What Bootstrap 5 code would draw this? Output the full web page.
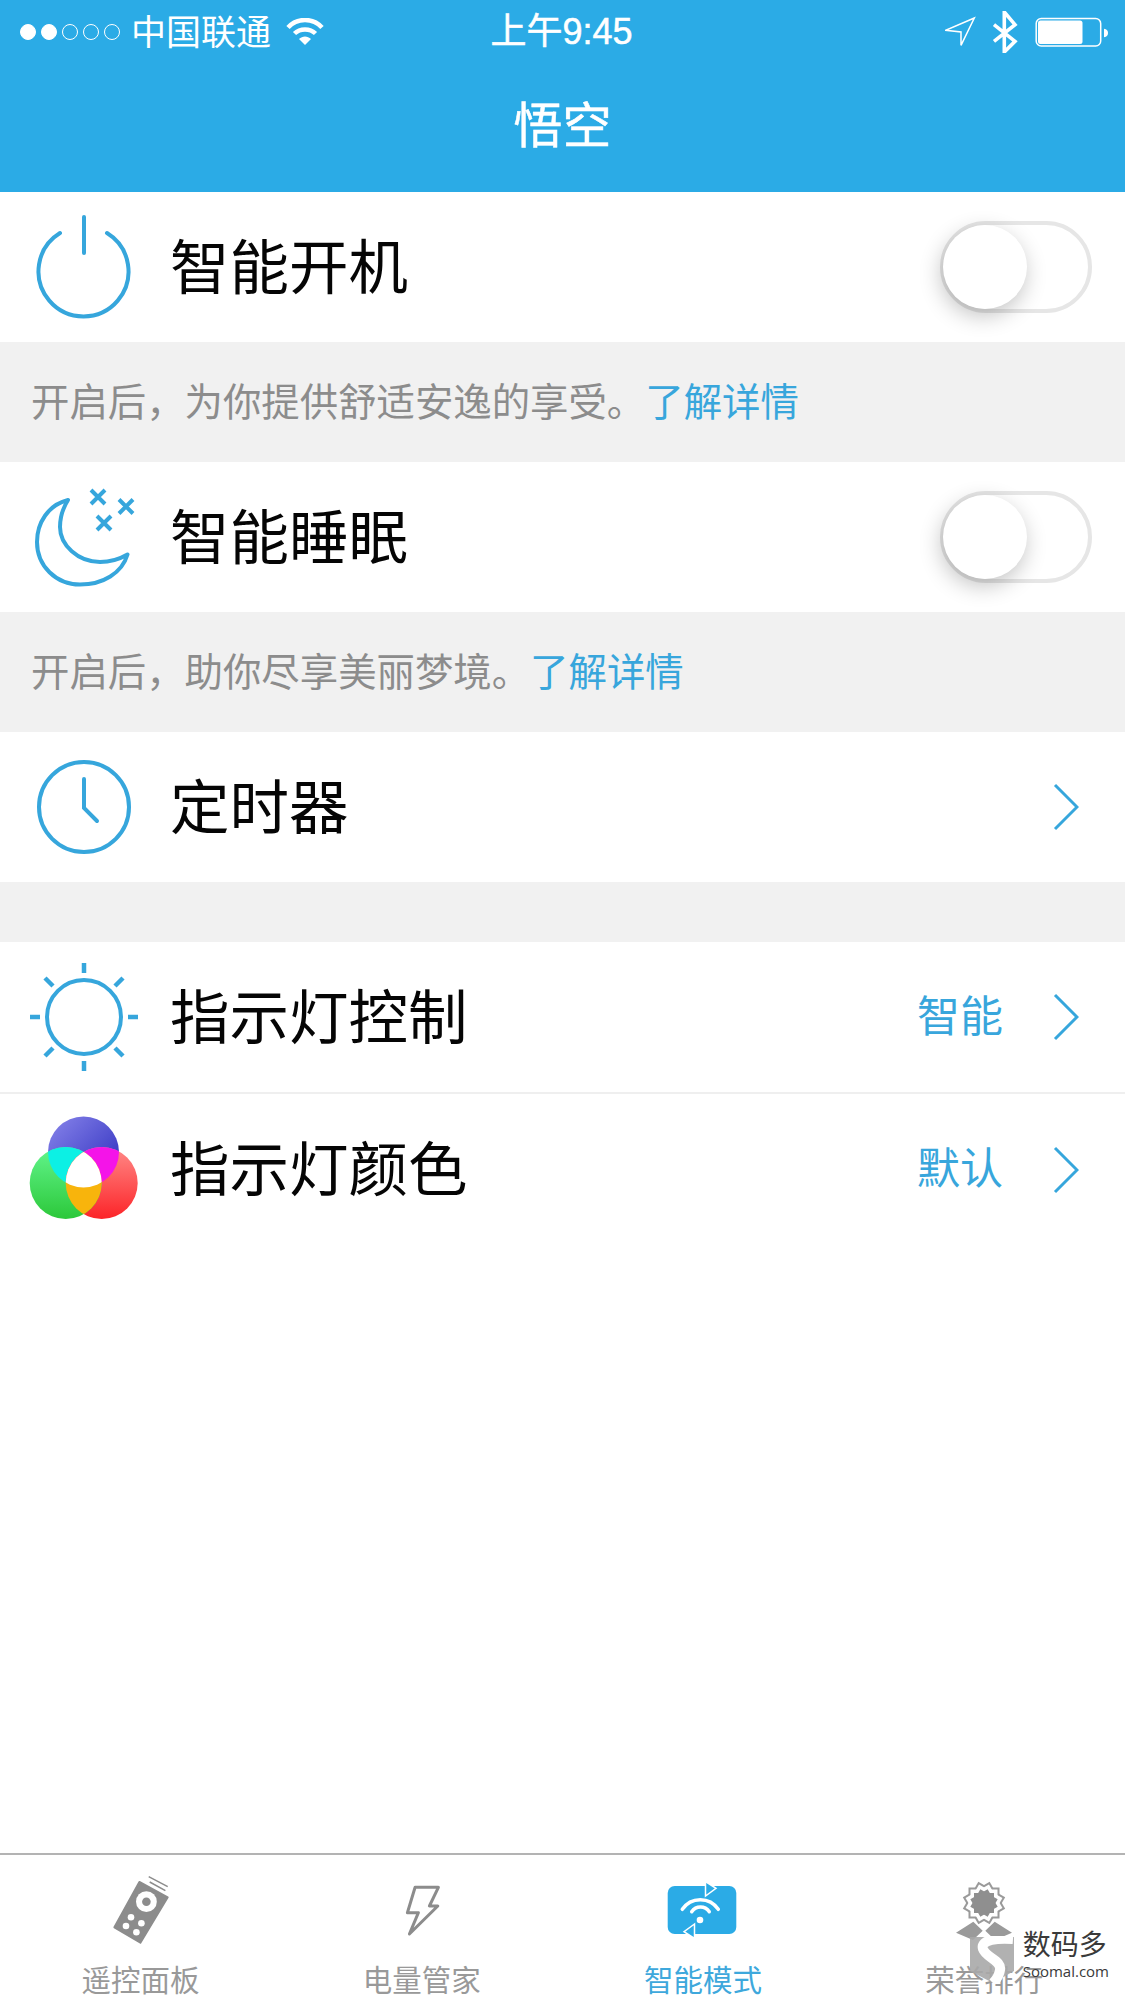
<!DOCTYPE html>
<html lang="zh-CN">

<head>
    <meta charset="UTF-8">
    <meta name="viewport" content="width=device-width, initial-scale=1.0">
    <title>悟空</title>
    <link href="https://cdn.jsdelivr.net/npm/bootstrap@5.3.3/dist/css/bootstrap.min.css" rel="stylesheet">
    <style>
        body {
            font-family: "Liberation Sans", "Noto Sans CJK SC", sans-serif;
            background: #fff;
        }

        .app-page {
            width: 1125px;
            height: 2001px;
            overflow: hidden;
        }

        .app-header {
            height: 192px;
            background: #2babe6;
            color: #fff;
        }

        .status-bar {
            height: 64px;
            padding: 0 17px 0 20px;
        }

        .status-side {
            flex: 1 1 0;
        }

        .signal-dots {
            gap: 5px;
        }

        .signal-dot {
            width: 16px;
            height: 16px;
            border: 1.5px solid #fff;
            border-radius: 50%;
        }

        .signal-dot.is-on {
            background: #fff;
        }

        .carrier-name {
            font-size: 35px;
            line-height: 1;
            margin: 0 15px 0 11px;
        }

        .clock-text {
            font-size: 36px;
            line-height: 1;
            margin-right: 5px;
            -webkit-text-stroke: .5px #fff;
        }

        .page-title {
            font-size: 49px;
            line-height: 1;
            padding-top: 38px;
            text-align: center;
            -webkit-text-stroke: .5px #fff;
        }

        .setting-row {
            height: 150px;
            padding: 0 46px 0 28px;
            color: #050505;
        }

        .setting-row.has-line {
            height: 153px;
            border-top: 2px solid #efefef;
        }

        .row-icon {
            width: 110px;
            height: 110px;
            flex: none;
            margin-right: 32px;
        }

        .row-name {
            font-size: 59.5px;
            line-height: 1;
            margin-top: 3px;
        }

        .row-value {
            font-size: 43px;
            line-height: 1;
            color: #38a6dc;
            margin-right: 50px;
        }

        .row-arrow {
            width: 26px;
            height: 48px;
            flex: none;
        }

        .hint-band {
            height: 120px;
            padding: 2px 0 0 31px;
            background: #f1f1f1;
            font-size: 38.4px;
            color: #8c8c8c;
        }

        .hint-band a {
            color: #38a6dc;
            text-decoration: none;
        }

        .gap-band {
            height: 60px;
            background: #f1f1f1;
        }

        .toggle-track {
            width: 152px;
            height: 92px;
            margin-right: -13px;
            padding: 3px;
            border: 4px solid #e6e6e6;
            border-radius: 46px;
            background: #fff;
        }

        .toggle-knob {
            width: 84px;
            height: 84px;
            margin: -3px 0 0 -4px;
            border-radius: 50%;
            background: #fff;
            box-shadow: -2px 7px 22px rgba(0, 0, 0, .24);
        }

        .tab-bar {
            height: 148px;
            border-top: 2px solid #b3b3b3;
            background: #fff;
        }

        .tab-item {
            flex: 1 1 0;
            padding-top: 15px;
            color: #999;
            text-decoration: none;
        }

        .tab-item.is-active {
            color: #3ea8dc;
        }

        .tab-icon {
            width: 100px;
            height: 80px;
        }

        .tab-label {
            font-size: 29.5px;
            line-height: 40px;
            margin-top: 11px;
        }

        .soomal-mark {
            right: 16px;
            bottom: 17px;
            color: #3a3a3a;
        }

        .soomal-name {
            font-size: 28px;
            line-height: 32px;
        }

        .soomal-url {
            font-family: "Open Sans", sans-serif;
            font-size: 15px;
            line-height: 18px;
        }
    </style>
</head>

<body>
    <div class="app-page d-flex flex-column">

        <!-- Header with status bar -->
        <header class="app-header flex-shrink-0">
            <div class="status-bar d-flex align-items-center">
                <div class="status-side d-flex align-items-center">
                    <span class="signal-dots d-flex">
                        <span class="signal-dot is-on"></span>
                        <span class="signal-dot is-on"></span>
                        <span class="signal-dot"></span>
                        <span class="signal-dot"></span>
                        <span class="signal-dot"></span>
                    </span>
                    <span class="carrier-name">中国联通</span>
                    <svg width="38" height="28" viewBox="0 0 38 28" fill="none" stroke="#fff" stroke-width="4.5">
                        <path d="M2 9.500C11-.5 27-.5 36 9.500" />
                        <path d="M8.500 15.500C14 10 24 10 29.500 15.500" />
                        <path d="M13 21 19 27 25 21C21.500 17.500 16.500 17.500 13 21Z" fill="#fff" stroke="none" />
                    </svg>
                </div>
                <div class="clock-text">上午9:45</div>
                <div class="status-side d-flex align-items-center justify-content-end">
                    <svg width="163" height="42" viewBox="945 9 163 42" fill="none" stroke="#fff">
                        <path d="M974.300 16 945.700 28.300 961 30 961 43.300Z" stroke-width="1.5" />
                        <path d="M994 22.700 1015 39.300 1004.300 50 1004.300 10 1015 22.700 994 39.300" stroke-width="3.6" />
                        <rect x="1036.200" y="16.500" width="64.500" height="27.500" rx="5" stroke-width="1.5" />
                        <rect x="1038" y="18.500" width="44.500" height="23.500" rx="2.500" fill="#fff" stroke="none" />
                        <path d="M1104 26.700C1107 27 1108 29 1108 31 1108 33 1107 35 1104 35.300Z" fill="#fff" stroke="none" />
                    </svg>
                </div>
            </div>
            <div class="page-title">悟空</div>
        </header>

        <main class="flex-grow-1">
            <!-- Smart power on -->
            <div class="setting-row d-flex align-items-center">
                <svg class="row-icon" viewBox="0 0 110 110" fill="none" stroke="#36a6dc" stroke-width="4" stroke-linecap="round">
                    <path d="M32 21A45 45 0 1 0 79 21" />
                    <path d="M56 5V41" />
                </svg>
                <span class="row-name">智能开机</span>
                <div class="toggle-track ms-auto">
                    <div class="toggle-knob"></div>
                </div>
            </div>
            <div class="hint-band d-flex align-items-center">
                <span>开启后，为你提供舒适安逸的享受。<a href="#">了解详情</a></span>
            </div>

            <!-- Smart sleep -->
            <div class="setting-row d-flex align-items-center">
                <svg class="row-icon" viewBox="0 0 110 110" fill="none" stroke="#36a6dc" stroke-width="4">
                    <path d="M40 18C20 23 9 41 9 60 9 84 28 102.500 52 102.500 75 102.500 94 91 99.500 72.500 90 78 80 80 72 80 50 80 32 63 32 45 32 35 35 26 40 18Z" stroke-linejoin="round" />
                    <path d="M63 8 77 22M77 8 63 22M91 17.500 105 31.500M105 17.500 91 31.500M69 34 83 48M83 34 69 48" />
                </svg>
                <span class="row-name">智能睡眠</span>
                <div class="toggle-track ms-auto">
                    <div class="toggle-knob"></div>
                </div>
            </div>
            <div class="hint-band d-flex align-items-center">
                <span>开启后，助你尽享美丽梦境。<a href="#">了解详情</a></span>
            </div>

            <!-- Timer -->
            <div class="setting-row d-flex align-items-center">
                <svg class="row-icon" viewBox="0 0 110 110" fill="none" stroke="#36a6dc" stroke-width="4" stroke-linecap="round">
                    <circle cx="56" cy="55" r="45" />
                    <path d="M56 27V56L69 69" />
                </svg>
                <span class="row-name">定时器</span>
                <svg class="row-arrow ms-auto" viewBox="0 0 26 48" fill="none" stroke="#36a6dc" stroke-width="3">
                    <path d="M2 2 24 24 2 46" />
                </svg>
            </div>

            <div class="gap-band"></div>

            <!-- Indicator control -->
            <div class="setting-row d-flex align-items-center">
                <svg class="row-icon" viewBox="0 0 110 110" fill="none" stroke="#36a6dc" stroke-width="4.500">
                    <circle cx="56" cy="55" r="37" stroke-width="4" />
                    <path d="M56 1V11M56 99V109M2 55H12M100 55H110M17 16 25 24M95 16 87 24M17 94 25 86M95 94 87 86" />
                </svg>
                <span class="row-name">指示灯控制</span>
                <span class="row-value ms-auto">智能</span>
                <svg class="row-arrow" viewBox="0 0 26 48" fill="none" stroke="#36a6dc" stroke-width="3">
                    <path d="M2 2 24 24 2 46" />
                </svg>
            </div>

            <!-- Indicator colour -->
            <div class="setting-row has-line d-flex align-items-center">
                <svg class="row-icon" viewBox="0 0 110 110">
                    <defs>
                        <linearGradient id="gradBlue" x1="0" y1="0" x2="1" y2="1">
                            <stop offset="0.1" stop-color="#7f7ce6" />
                            <stop offset="0.8" stop-color="#3a3ac4" />
                        </linearGradient>
                        <linearGradient id="gradGreen" x1="0" y1="0" x2="0" y2="1">
                            <stop offset="0" stop-color="#62f58c" />
                            <stop offset="1" stop-color="#2cc83a" />
                        </linearGradient>
                        <linearGradient id="gradRed" x1="0" y1="0" x2="0" y2="1">
                            <stop offset="0" stop-color="#ff8a88" />
                            <stop offset="1" stop-color="#fc2428" />
                        </linearGradient>
                        <clipPath id="clipBlue"><circle cx="55.500" cy="37" r="35.500" /></clipPath>
                        <clipPath id="clipGreen"><circle cx="37.700" cy="68" r="36" /></clipPath>
                        <clipPath id="clipRed"><circle cx="73.700" cy="68" r="36" /></clipPath>
                    </defs>
                    <circle cx="55.500" cy="37" r="35.500" fill="url(#gradBlue)" />
                    <circle cx="73.700" cy="68" r="36" fill="url(#gradRed)" />
                    <circle cx="37.700" cy="68" r="36" fill="url(#gradGreen)" />
                    <g clip-path="url(#clipBlue)">
                        <rect width="110" height="110" clip-path="url(#clipGreen)" fill="#0cf0e4" />
                        <rect width="110" height="110" clip-path="url(#clipRed)" fill="#f414e8" />
                    </g>
                    <g clip-path="url(#clipGreen)">
                        <rect width="110" height="110" clip-path="url(#clipRed)" fill="#f8b40c" />
                    </g>
                    <g clip-path="url(#clipBlue)">
                        <g clip-path="url(#clipGreen)">
                            <rect width="110" height="110" clip-path="url(#clipRed)" fill="#fff" />
                        </g>
                    </g>
                </svg>
                <span class="row-name">指示灯颜色</span>
                <span class="row-value ms-auto">默认</span>
                <svg class="row-arrow" viewBox="0 0 26 48" fill="none" stroke="#36a6dc" stroke-width="3">
                    <path d="M2 2 24 24 2 46" />
                </svg>
            </div>
        </main>

        <!-- Bottom tabs -->
        <nav class="tab-bar d-flex position-relative flex-shrink-0">
            <a class="tab-item d-flex flex-column align-items-center" href="#">
                <svg class="tab-icon" viewBox="0 0 100 80">
                    <path d="M48.400 12 76.700 27.300 49.400 72.700 23.400 57.300Z" fill="#8c8c8c" stroke="#8c8c8c" stroke-width="2" stroke-linejoin="round" />
                    <path d="M57.700 6.700 76.700 16.700M58.700 12 74.400 20.700" stroke="#8c8c8c" stroke-width="1.500" fill="none" />
                    <circle cx="55.400" cy="31.700" r="10.400" fill="#fff" />
                    <circle cx="55.400" cy="31.700" r="4.300" fill="#8c8c8c" />
                    <g fill="#fff">
                        <circle cx="40" cy="47.300" r="3.300" />
                        <circle cx="50.400" cy="53.300" r="3.300" />
                        <circle cx="35" cy="56" r="3.300" />
                        <circle cx="45.400" cy="62.300" r="3.300" />
                    </g>
                </svg>
                <span class="tab-label">遥控面板</span>
            </a>
            <a class="tab-item d-flex flex-column align-items-center" href="#">
                <svg class="tab-icon" viewBox="0 0 100 80">
                    <path d="M43.100 17.300H66.400L57.400 36H65.800L37.400 64 46.400 42.700H35.400Z" fill="none" stroke="#8c8c8c" stroke-width="3" stroke-linejoin="round" />
                </svg>
                <span class="tab-label">电量管家</span>
            </a>
            <a class="tab-item is-active d-flex flex-column align-items-center" href="#">
                <svg class="tab-icon" viewBox="0 0 100 80">
                    <rect x="14.700" y="16" width="68.600" height="48" rx="7" fill="#2babe6" />
                    <path d="M52.500 11.500 63 18.300 52.500 26Z" fill="#2babe6" stroke="#fff" stroke-width="1.500" />
                    <path d="M41.500 54 31 61.700 41.500 68.500Z" fill="#2babe6" stroke="#fff" stroke-width="1.500" />
                    <g fill="none" stroke="#fff" stroke-width="3.500" stroke-linecap="round">
                        <path d="M29.300 39.300C38 26.500 56.600 26.500 65.300 39.300" />
                        <path d="M38.700 41.700C43 35.500 52 35.500 56.300 41.700" />
                    </g>
                    <circle cx="47" cy="50" r="3.300" fill="#fff" />
                </svg>
                <span class="tab-label">智能模式</span>
            </a>
            <a class="tab-item d-flex flex-column align-items-center" href="#">
                <svg class="tab-icon" viewBox="0 0 100 80">
                    <defs>
                        <g id="rosette">
                            <rect x="-10" y="-10" width="20" height="20" />
                            <rect x="-10" y="-10" width="20" height="20" transform="rotate(30)" />
                            <rect x="-10" y="-10" width="20" height="20" transform="rotate(60)" />
                        </g>
                    </defs>
                    <use href="#rosette" fill="#9a9a9a" transform="translate(50 33) scale(1.550)" />
                    <use href="#rosette" fill="#fff" transform="translate(50 33) scale(1.350)" />
                    <use href="#rosette" fill="#8f8f8f" transform="translate(50 33) scale(1)" />
                    <path d="M22 62.700 39.300 51.700 48.700 60.700 39 70ZM78 62.700 60.700 51.700 51.300 60.700 61 70Z" fill="#9a9a9a" />
                </svg>
                <span class="tab-label">荣誉排行</span>
            </a>

            <!-- Watermark over the last tab -->
            <div class="soomal-mark position-absolute d-flex align-items-end gap-2">
                <svg width="46" height="48" viewBox="0 0 46 48">
                    <path d="M1 1H45V35L24 47 1 35Z" fill="#a8a8a8" opacity=".9" />
                    <path d="M44 3C30 2 11 3 14 13 17 22 33 24 31 34 30 40 27 44 24 47" fill="none" stroke="#fff" stroke-width="10" />
                </svg>
                <div class="pb-1">
                    <div class="soomal-name">数码多</div>
                    <div class="soomal-url">Soomal.com</div>
                </div>
            </div>
        </nav>
    </div>

    <script src="https://cdn.jsdelivr.net/npm/bootstrap@5.3.3/dist/js/bootstrap.bundle.min.js"></script>
</body>

</html>
